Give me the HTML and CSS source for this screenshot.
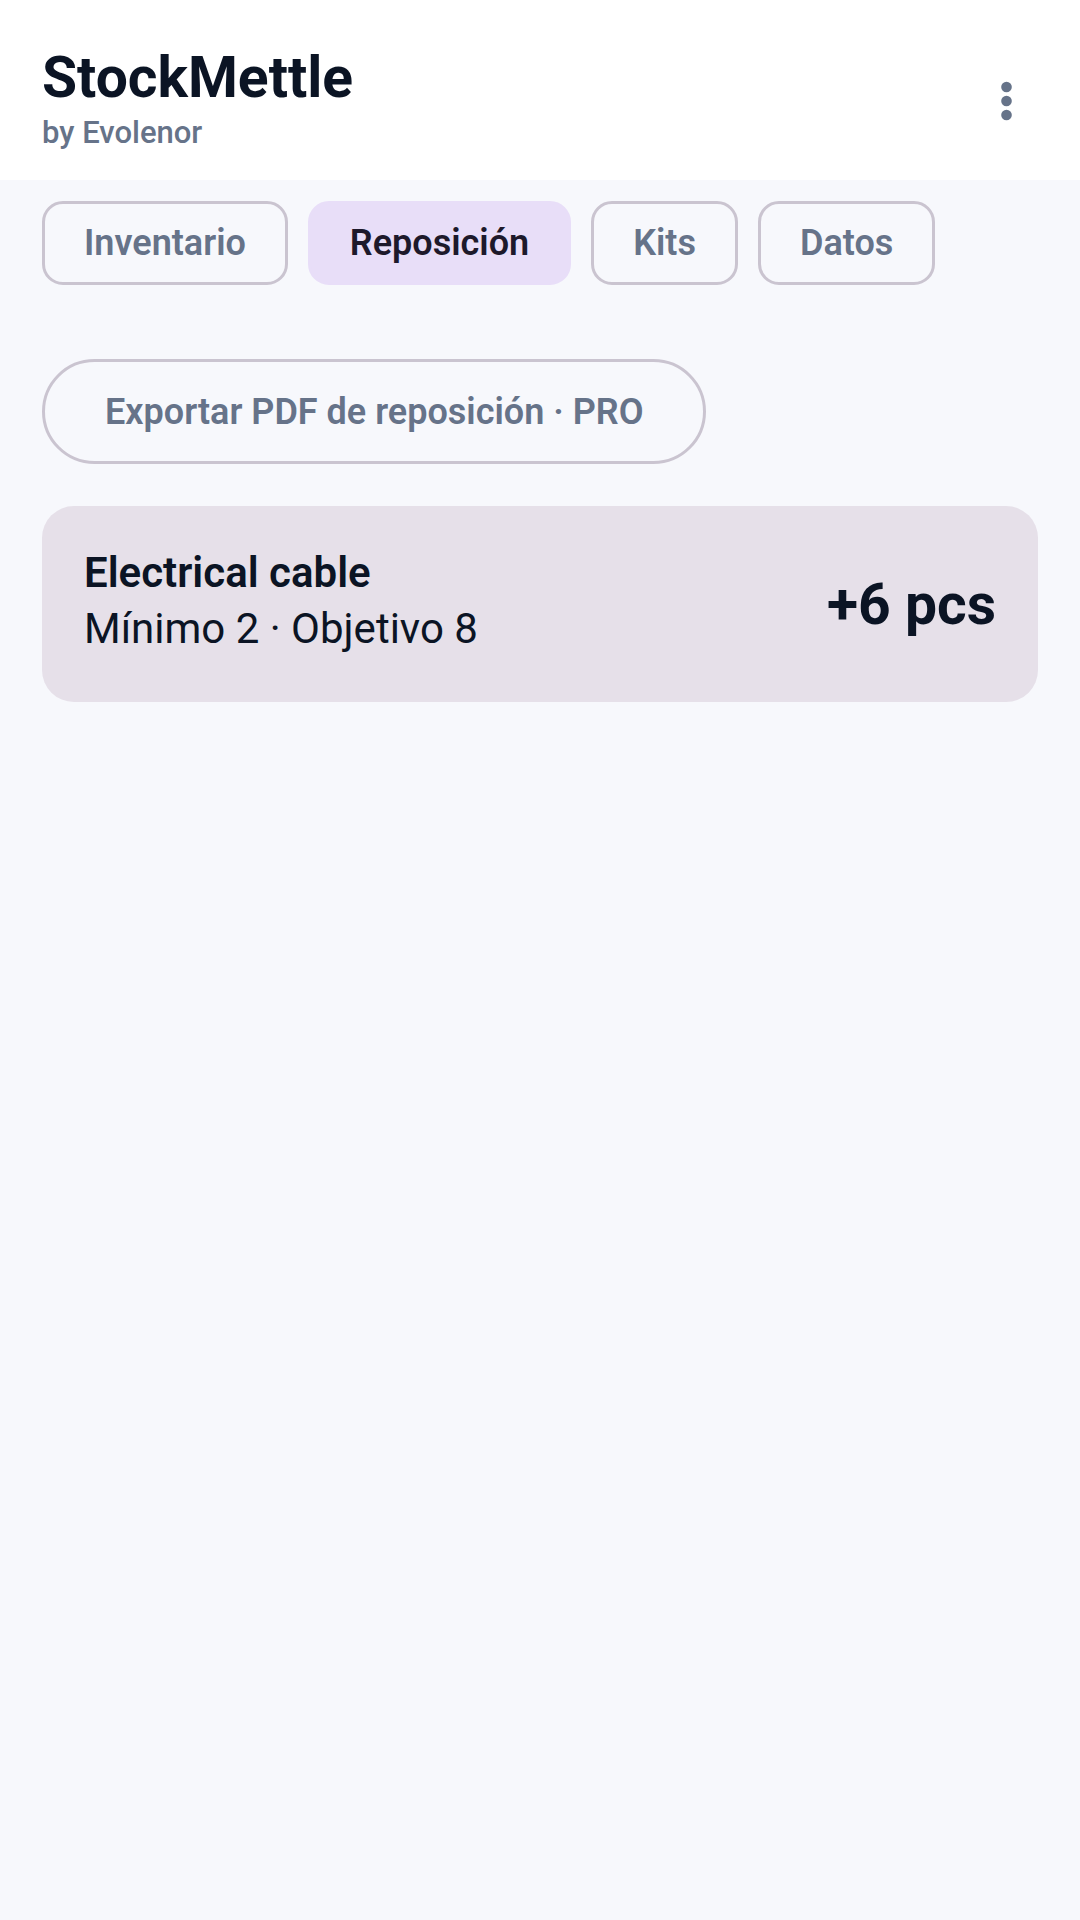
FILE: index.html
```html
<!DOCTYPE html>
<html lang="es">
<head>
    <meta charset="UTF-8">
    <meta name="viewport" content="width=device-width, initial-scale=1.0">
    <title>StockMettle - Reposición</title>
    <link rel="stylesheet" href="styles.css">
</head>
<body>
    <header class="top-bar">
        <div class="brand">
            <h1>StockMettle</h1>
            <p>by Evolenor</p>
        </div>
        <button type="button" class="menu-btn" aria-label="Más opciones">
            <svg width="64" height="64" viewBox="0 0 64 64" fill="currentColor" aria-hidden="true">
                <circle cx="32.5" cy="18" r="5.3"/>
                <circle cx="32.5" cy="32" r="5.3"/>
                <circle cx="32.5" cy="46" r="5.3"/>
            </svg>
        </button>
    </header>

    <nav class="tabs">
        <button type="button" class="tab">Inventario</button>
        <button type="button" class="tab active" aria-current="page">Reposición</button>
        <button type="button" class="tab">Kits</button>
        <button type="button" class="tab">Datos</button>
    </nav>

    <main class="content">
        <button type="button" class="export-btn">Exportar PDF de reposición · PRO</button>

        <article class="item-card">
            <div class="item-info">
                <h2>Electrical cable</h2>
                <p>Mínimo 2 · Objetivo 8</p>
            </div>
            <strong class="item-qty">+6 pcs</strong>
        </article>
    </main>
</body>
</html>
```
FILE: styles.css
```css
/* Reset y base */
* {
    margin: 0;
    padding: 0;
    box-sizing: border-box;
}

body {
    background-color: #f7f8fc;
    color: #0b1424;
    font-family: Roboto, sans-serif;
    font-size: 42px;
}

button {
    font-family: inherit;
    background: none;
    border: none;
    color: #667389;
    cursor: pointer;
}

/* Cabecera */
.top-bar {
    display: flex;
    align-items: center;
    justify-content: space-between;
    padding: 48px 42px 26px;
    background: white;
}

.brand h1 {
    font-size: 57px;
    font-weight: 700;
    line-height: 60px;
}

.brand p {
    font-size: 31px;
    font-weight: 500;
    line-height: 46px;
    padding-top: 2px;
    margin-bottom: -2px;
    color: #667389;
}

.menu-btn,
.menu-btn svg {
    display: block;
}

/* Pestañas */
.tabs {
    display: flex;
    gap: 20px;
    padding: 21px 42px;
}

.tab {
    height: 84px;
    padding: 0 39px;
    border: 3px solid #cac4d0;
    border-radius: 21px;
    font-size: 36px;
    font-weight: 600;
}

.tab.active {
    background: #e8def8;
    border-color: #e8def8;
    color: #1d192b;
}

/* Contenido */
.content {
    display: flex;
    flex-direction: column;
    align-items: flex-start;
    gap: 42px;
    padding: 53px 42px 42px;
}

.export-btn {
    height: 105px;
    padding: 0 60px;
    border: 3px solid #cac4d0;
    border-radius: 53px;
    font-size: 36px;
    font-weight: 600;
}

/* Tarjeta de artículo */
.item-card {
    display: flex;
    align-items: center;
    justify-content: space-between;
    width: 100%;
    padding: 0 42px;
    background: #e6e0e9;
    border-radius: 32px;
}

.item-info {
    padding: 39px 0 45px;
}

.item-info h2 {
    font-size: 42px;
    font-weight: 600;
    line-height: 56px;
}

.item-info p {
    line-height: 56px;
}

.item-qty {
    font-size: 57px;
    font-weight: 700;
}
```
